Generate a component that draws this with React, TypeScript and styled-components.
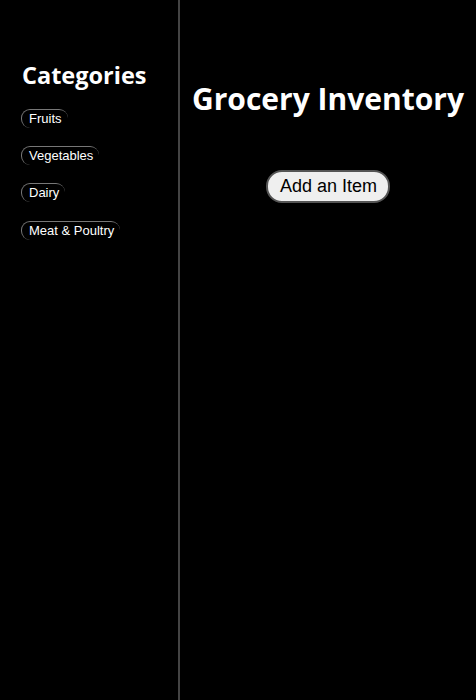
import React from 'react';
import styled, { createGlobalStyle } from 'styled-components';

const GlobalStyle = createGlobalStyle`
  html, body {
    margin: 0;
    padding: 0;
    background-color: #000;
  }
  #root {
    min-height: 100vh;
  }
`;

const Layout = styled.div`
  display: flex;
  min-height: 100vh;
  background-color: #000;
  color: #fff;
`;

const Sidebar = styled.aside`
  width: 180px;
  flex-shrink: 0;
  border-right: 2px solid #444;
  padding: 59px 0 0 21px;
  box-sizing: border-box;
`;

const SideTitle = styled.h2`
  margin: 0 0 18px 1px;
  font-family: 'Open Sans', sans-serif;
  font-weight: 700;
  font-size: 23.5px;
  line-height: 32px;
  color: #fff;
`;

const CategoryList = styled.ul`
  margin: 0;
  padding: 0;
  display: flex;
  flex-direction: column;
  align-items: flex-start;
  gap: 18.2px;
`;

const CategoryItem = styled.li`
  list-style: none;
`;

const CategoryButton = styled.button`
  background: #000;
  color: #fff;
  font-family: 'Liberation Sans', Arial, sans-serif;
  font-size: 13px;
  padding: 1px 6px 2px 7px;
  border: none;
  border-top: 1px solid #777;
  border-left: 1px solid #777;
  border-radius: 9px;
  cursor: pointer;
`;

const Main = styled.main`
  flex: 1;
  display: flex;
  flex-direction: column;
  align-items: center;
  padding-top: 78px;
`;

const Title = styled.h1`
  margin: 0 0 51px;
  font-family: 'Open Sans', sans-serif;
  font-weight: 700;
  font-size: 30px;
  color: #fff;
  white-space: nowrap;
`;

const AddButton = styled.button`
  background: #efefef;
  color: #000;
  font-family: 'Liberation Sans', Arial, sans-serif;
  font-size: 18px;
  padding: 4px 11px 4px 12px;
  border: 2px solid #555;
  border-radius: 16px;
  cursor: pointer;
`;

const categories = ['Fruits', 'Vegetables', 'Dairy', 'Meat & Poultry'];

const App: React.FC = () => {
  return (
    <>
      <GlobalStyle />
      <Layout>
        <Sidebar>
          <SideTitle>Categories</SideTitle>
          <CategoryList>
            {categories.map((c) => (
              <CategoryItem key={c}>
                <CategoryButton>{c}</CategoryButton>
              </CategoryItem>
            ))}
          </CategoryList>
        </Sidebar>
        <Main>
          <Title>Grocery Inventory</Title>
          <AddButton>Add an Item</AddButton>
        </Main>
      </Layout>
    </>
  );
};

export default App;
